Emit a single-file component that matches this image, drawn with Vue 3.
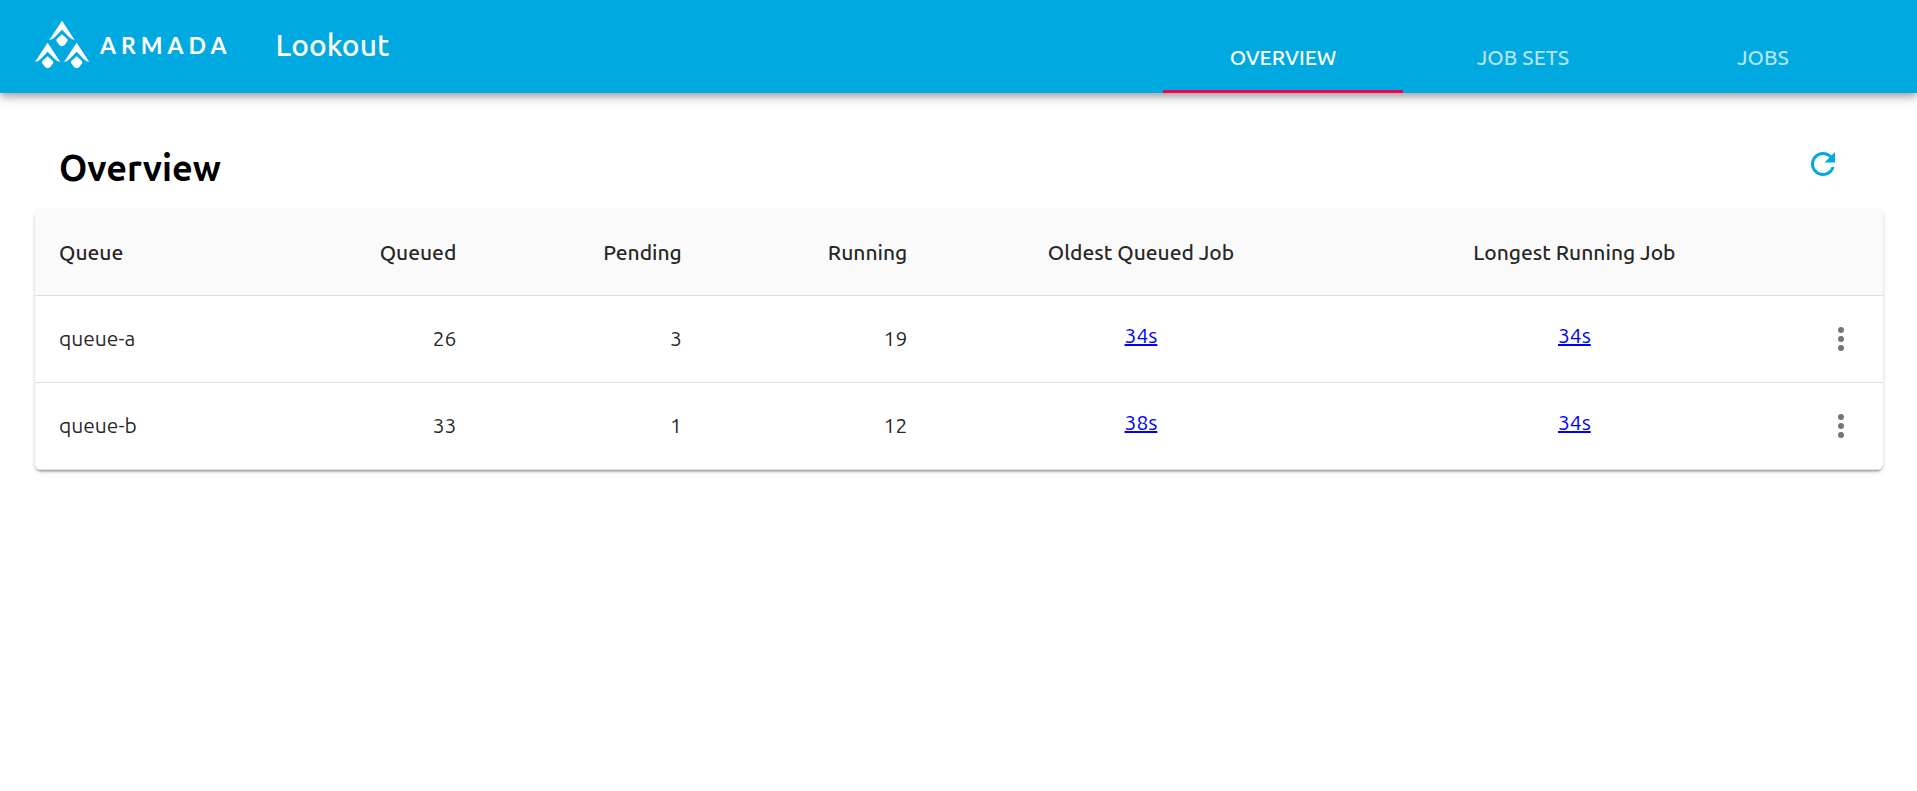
<script setup>
const tabs = [
  { label: 'Overview', active: true },
  { label: 'Job Sets', active: false },
  { label: 'Jobs', active: false },
]

const queues = [
  { name: 'queue-a', queued: 26, pending: 3, running: 19, oldest: '34s', longest: '34s' },
  { name: 'queue-b', queued: 33, pending: 1, running: 12, oldest: '38s', longest: '34s' },
]
</script>

<template>
  <div class="app">
    <header class="bar">
      <div class="titles">
        <a class="brand" href="#">
          <svg class="mark" viewBox="0 0 168 150" aria-hidden="true">
            <defs>
              <g id="ship">
                <path d="M0 0 L38 58 Q28 56 21 49 L0 27 L-21 49 Q-28 56 -38 58 Z" />
                <path d="M0 41 L16 55 Q18 58 16 62 L8 73 Q0 80 -8 73 L-16 62 Q-18 58 -16 55 Z" />
              </g>
            </defs>
            <use href="#ship" x="84" y="2" />
            <use href="#ship" x="41" y="68" />
            <use href="#ship" x="128" y="68" />
          </svg>
          <span class="wordmark">ARMADA</span>
        </a>
        <span class="product">Lookout</span>
      </div>
      <nav class="tabs">
        <a v-for="tab in tabs" :key="tab.label" href="#" class="tab" :class="{ active: tab.active }">{{ tab.label }}</a>
      </nav>
    </header>

    <main class="content">
      <div class="heading">
        <h1>Overview</h1>
        <button class="icon-button" type="button" aria-label="Refresh">
          <svg class="icon" viewBox="0 0 24 24" aria-hidden="true">
            <path d="M17.65 6.35C16.2 4.9 14.21 4 12 4c-4.42 0-7.99 3.58-7.99 8s3.57 8 7.99 8c3.73 0 6.84-2.55 7.73-6h-2.08c-.82 2.33-3.04 4-5.65 4-3.31 0-6-2.69-6-6s2.69-6 6-6c1.66 0 3.14.69 4.22 1.78L13 11h7V4l-2.35 2.35z" />
          </svg>
        </button>
      </div>

      <div class="card">
        <table>
          <colgroup>
            <col class="col-name" />
            <col class="col-queued" />
            <col class="col-pending" />
            <col class="col-running" />
            <col class="col-oldest" />
            <col class="col-longest" />
            <col class="col-menu" />
          </colgroup>
          <thead>
            <tr>
              <th scope="col">Queue</th>
              <th scope="col" class="num">Queued</th>
              <th scope="col" class="num">Pending</th>
              <th scope="col" class="num">Running</th>
              <th scope="col" class="mid">Oldest Queued Job</th>
              <th scope="col" class="mid">Longest Running Job</th>
              <td></td>
            </tr>
          </thead>
          <tbody>
            <tr v-for="q in queues" :key="q.name">
              <td>{{ q.name }}</td>
              <td class="num">{{ q.queued }}</td>
              <td class="num">{{ q.pending }}</td>
              <td class="num">{{ q.running }}</td>
              <td class="mid"><a class="duration" href="#">{{ q.oldest }}</a></td>
              <td class="mid"><a class="duration" href="#">{{ q.longest }}</a></td>
              <td class="menu">
                <button class="icon-button grey" type="button" :aria-label="'Actions for ' + q.name">
                  <svg class="icon" viewBox="0 0 24 24" aria-hidden="true">
                    <circle cx="12" cy="6" r="2" />
                    <circle cx="12" cy="12" r="2" />
                    <circle cx="12" cy="18" r="2" />
                  </svg>
                </button>
              </td>
            </tr>
          </tbody>
        </table>
      </div>
    </main>
  </div>
</template>

<style>
body {
  margin: 0;
  background: #fff;
}
</style>

<style scoped>
.app {
  font-family: Ubuntu, "Noto Sans", "Open Sans", sans-serif;
  font-size: 21px;
  line-height: 30px;
  color: rgba(0, 0, 0, 0.87);
}

.bar {
  display: flex;
  align-items: center;
  justify-content: space-between;
  height: 93px;
  box-sizing: border-box;
  padding: 0 34px;
  background: #00a9e0;
  color: #fff;
  box-shadow: 0 3px 6px -1px rgba(0, 0, 0, 0.2), 0 6px 8px 0 rgba(0, 0, 0, 0.14), 0 2px 15px 0 rgba(0, 0, 0, 0.12);
}

.titles {
  display: flex;
  align-items: center;
  gap: 44px;
  padding-bottom: 4px;
}

.brand {
  display: flex;
  align-items: center;
  gap: 10px;
  color: inherit;
  text-decoration: none;
}

.mark {
  width: 56px;
  height: 50px;
  fill: #fff;
}

.wordmark {
  font-family: Lato, sans-serif;
  font-size: 23px;
  font-weight: 700;
  letter-spacing: 5px;
}

.product {
  font-size: 30px;
  font-weight: 500;
}

.tabs {
  display: flex;
  align-self: flex-end;
}

.tab {
  display: flex;
  align-items: center;
  justify-content: center;
  width: 240px;
  height: 72px;
  box-sizing: border-box;
  padding-top: 3px;
  border-bottom: 3px solid transparent;
  color: rgba(255, 255, 255, 0.7);
  font-weight: 500;
  text-decoration: none;
  text-transform: uppercase;
}

.tab.active {
  color: #fff;
  border-bottom-color: #f50057;
}

.content {
  padding: 36px 34px 36px 35px;
}

.heading {
  display: flex;
  align-items: flex-start;
  justify-content: space-between;
  height: 80px;
  padding: 0 42px 0 24px;
}

h1 {
  margin: 15px 0 0;
  font-size: 36px;
  line-height: 48px;
  font-weight: 700;
  color: #000;
}

.icon-button {
  display: inline-flex;
  margin: 0;
  padding: 17px 0;
  border: 0;
  background: none;
  color: #00a9e0;
  cursor: pointer;
}

.icon-button.grey {
  padding: 0;
  color: #757575;
}

.icon {
  width: 36px;
  height: 36px;
  fill: currentColor;
}

.card {
  overflow: hidden;
  border-radius: 6px;
  background: #fff;
  box-shadow: 0 3px 2px -2px rgba(0, 0, 0, 0.2), 0 2px 2px 0 rgba(0, 0, 0, 0.14), 0 2px 5px 0 rgba(0, 0, 0, 0.12);
}

table {
  width: 100%;
  table-layout: fixed;
  border-collapse: separate;
  border-spacing: 0;
}

.col-name {
  width: 12%;
}

.col-queued {
  width: 12.1%;
}

.col-pending,
.col-running {
  width: 12.2%;
}

.col-oldest {
  width: 22.7%;
}

.col-menu {
  width: 85px;
}

th,
td {
  height: 87px;
  box-sizing: border-box;
  padding: 0 24px;
  border-bottom: 1px solid #e0e0e0;
  text-align: left;
  font-weight: 400;
}

td {
  padding-bottom: 2px;
}

thead th,
thead td {
  background: #fafafa;
  font-weight: 500;
}

.num {
  text-align: right;
}

.mid {
  text-align: center;
}

.duration {
  display: block;
  padding-bottom: 6px;
  color: #00f;
  text-decoration: underline;
  text-decoration-thickness: 2px;
}

.menu {
  padding: 0;
  text-align: center;
  line-height: 0;
}
</style>
